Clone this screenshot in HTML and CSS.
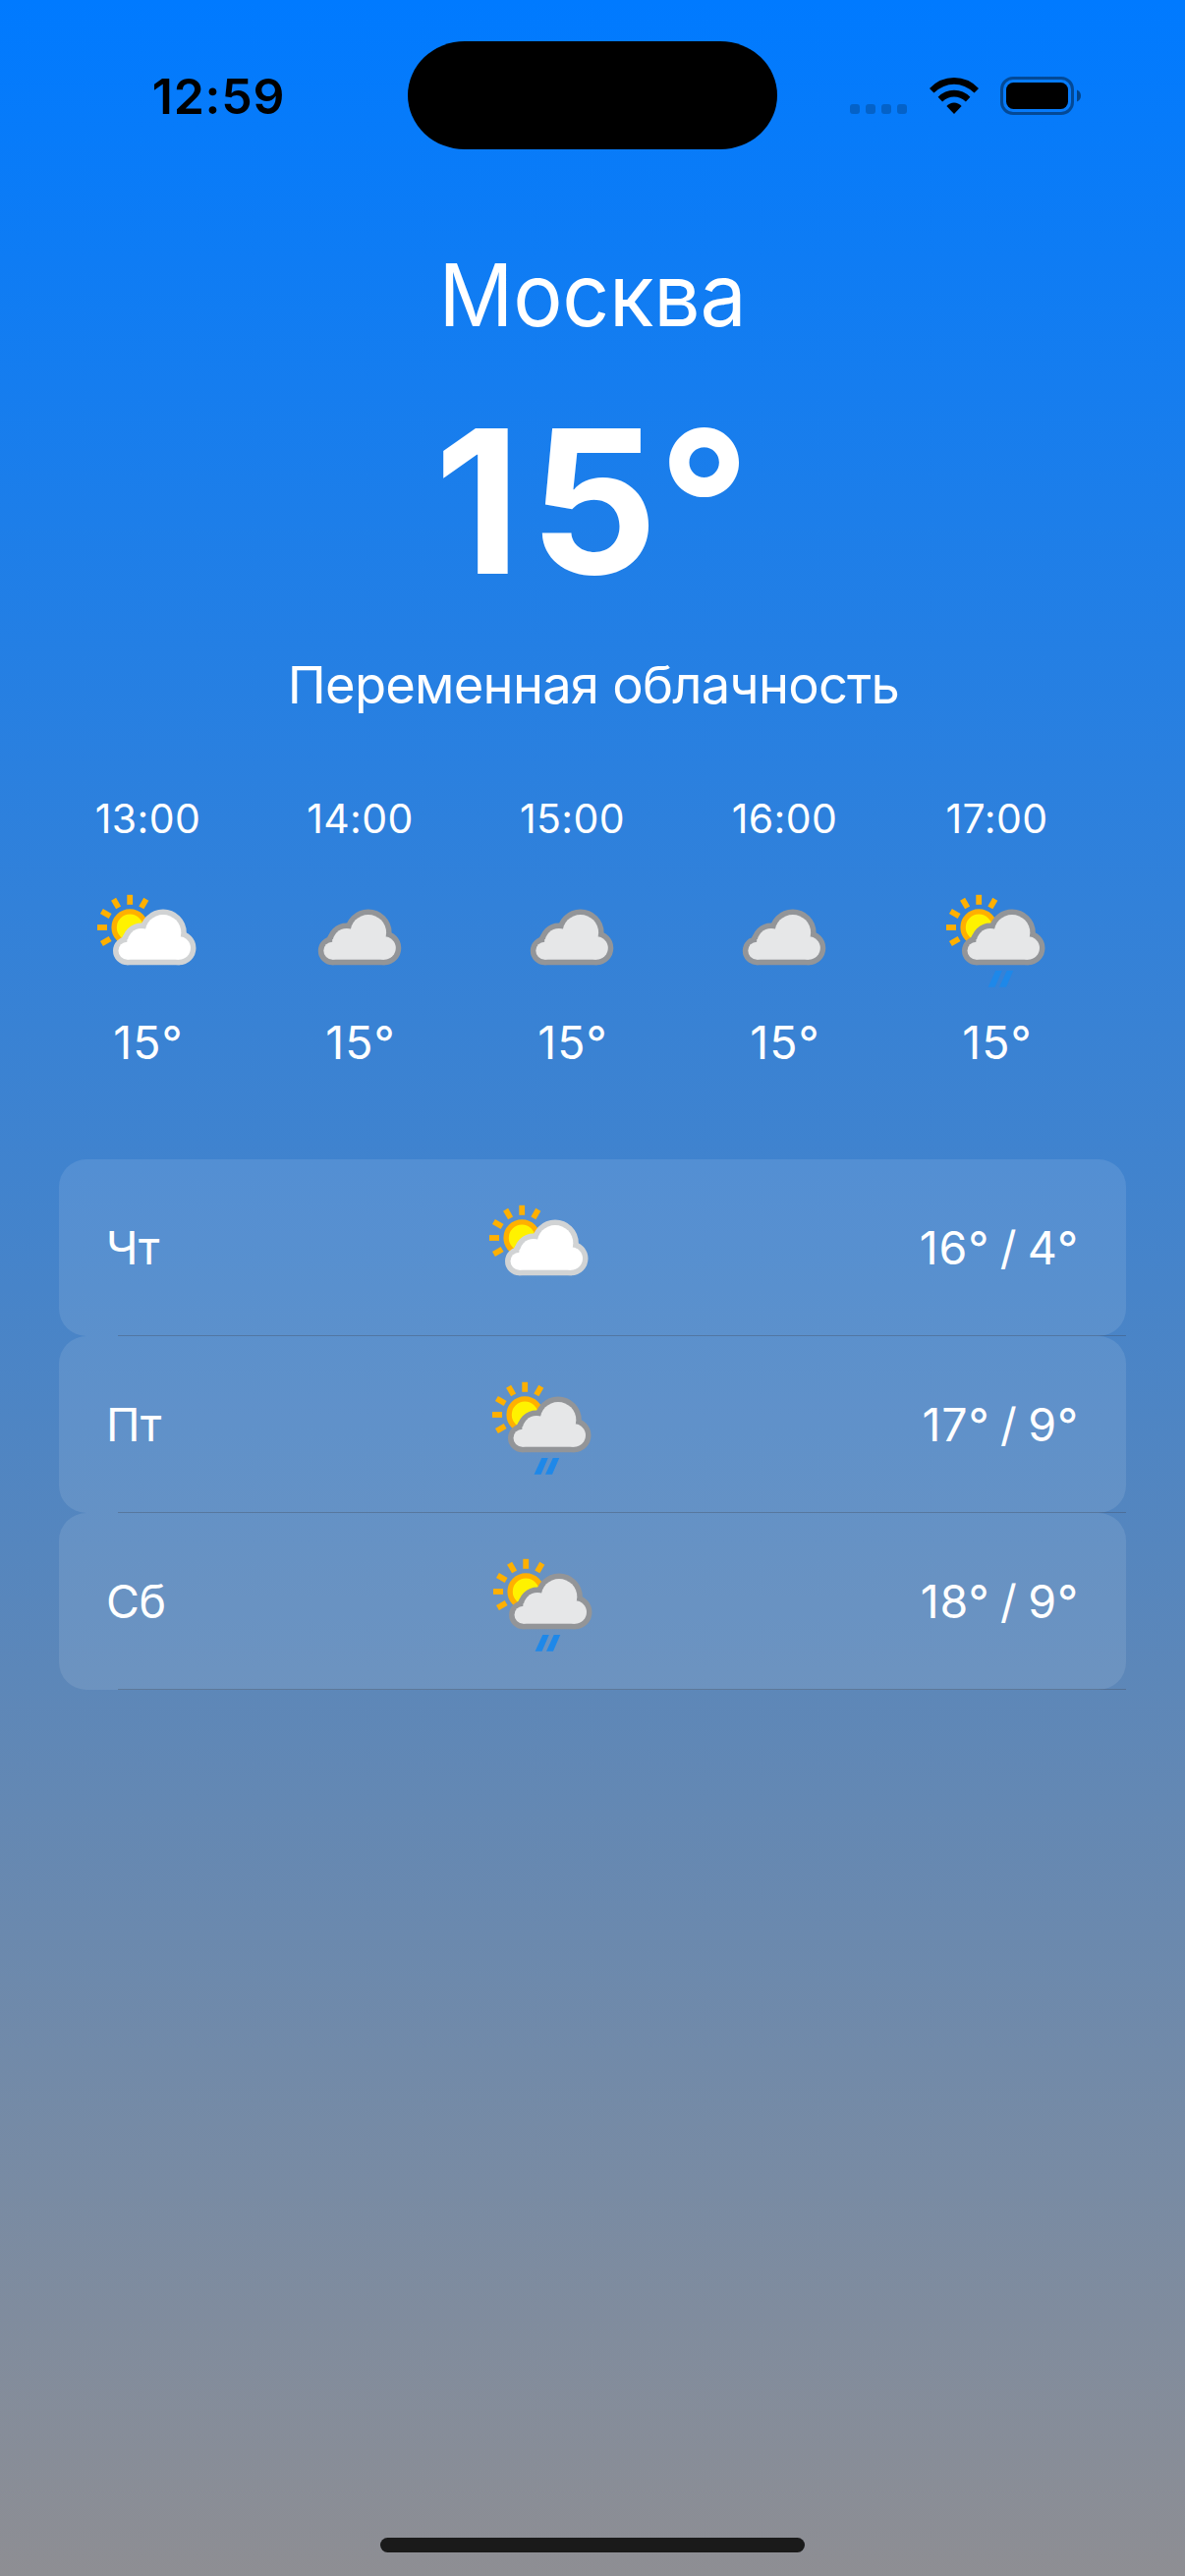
FILE: index.html
```
<!DOCTYPE html>
<html lang="ru">
<head>
<meta charset="utf-8">
<title>Погода</title>
<link rel="stylesheet" href="styles.css">
</head>
<body>
<svg class="defs" aria-hidden="true">
  <defs>
    <g id="sun">
      <circle cx="42.2" cy="50" r="16.1" fill="#fff200" stroke="#ffb000" stroke-width="5.4"/>
      <g stroke="#ffb000" stroke-width="5.8">
        <path d="M19 50H9"/>
        <path d="M19 50H9" transform="rotate(-30 42.2 50)"/>
        <path d="M19 50H9" transform="rotate(30 42.2 50)"/>
        <path d="M19 50H9" transform="rotate(60 42.2 50)"/>
        <path d="M19 50H9" transform="rotate(90 42.2 50)"/>
        <path d="M19 50H9" transform="rotate(120 42.2 50)"/>
      </g>
    </g>
    <g id="puffs">
      <circle cx="76" cy="55.3" r="18.3"/>
      <circle cx="54" cy="65.3" r="14.3"/>
      <circle cx="92.3" cy="71" r="11.7"/>
      <circle cx="39.5" cy="73.7" r="9"/>
      <rect x="39.5" y="62" width="52.8" height="20.7"/>
    </g>
    <g id="white-cloud">
      <use href="#puffs" fill="#d1d3d4" stroke="#d1d3d4" stroke-width="11" stroke-linejoin="round"/>
      <use href="#puffs" fill="#fff"/>
    </g>
    <g id="gray-cloud">
      <use href="#puffs" fill="#939598" stroke="#939598" stroke-width="11" stroke-linejoin="round"/>
      <use href="#puffs" fill="#e6e7e8"/>
    </g>
    <symbol id="partly" viewBox="0 0 120 120"><use href="#sun"/><use href="#white-cloud"/></symbol>
    <symbol id="cloudy" viewBox="0 0 120 120"><use href="#gray-cloud" x="-7.2"/></symbol>
    <symbol id="rain" viewBox="0 0 120 120">
      <use href="#sun"/><use href="#gray-cloud"/>
      <path d="M59.3 94h6.500l-7.200 16.700h-7zM70.700 94h6.500l-7.200 16.700h-7z" fill="#1e88e9"/>
    </symbol>
  </defs>
</svg>
<main class="screen">
  <header class="status">
    <time class="clock">12:59</time>
    <div class="island"></div>
    <div class="indicators">
      <div class="cellular"><i></i><i></i><i></i><i></i></div>
      <svg class="wifi" viewBox="0 0 50 37">
        <path d="M0 10.9Q10.5 0 25 0T50 10.9L45.5 15.5Q36 6.7 25 6.7T4.5 15.5z"/>
        <path d="M8.6 19.7Q15.4 12.7 25 12.7T41.4 19.7L36.9 24.5Q31.5 19.5 25 19.5T13.1 24.5z"/>
        <path d="M17.4 29Q20.6 25.4 25 25.4T32.6 29L25 37z"/>
      </svg>
      <svg class="battery" viewBox="0 0 82 39">
        <rect x="1.5" y="1.5" width="72" height="36" rx="11.5" fill="none" stroke="#000" stroke-opacity=".4" stroke-width="3"/>
        <rect x="6" y="6" width="63" height="27" rx="7.5"/>
        <path d="M78 13.5c2.5 1 4 3.300 4 6s-1.500 5-4 6z" fill-opacity=".45"/>
      </svg>
    </div>
  </header>

  <section class="current">
    <h1 class="city">Москва</h1>
    <p class="now"><span class="tens">1</span>5°</p>
    <p class="summary">Переменная облачность</p>
  </section>

  <section class="hourly">
    <div class="hour"><span class="at">13:00</span><svg class="icon"><use href="#partly"/></svg><span class="deg">15°</span></div>
    <div class="hour"><span class="at">14:00</span><svg class="icon"><use href="#cloudy"/></svg><span class="deg">15°</span></div>
    <div class="hour"><span class="at">15:00</span><svg class="icon"><use href="#cloudy"/></svg><span class="deg">15°</span></div>
    <div class="hour"><span class="at">16:00</span><svg class="icon"><use href="#cloudy"/></svg><span class="deg">15°</span></div>
    <div class="hour"><span class="at">17:00</span><svg class="icon"><use href="#rain"/></svg><span class="deg">15°</span></div>
  </section>

  <section class="daily">
    <div class="day"><span class="name">Чт</span><svg class="icon"><use href="#partly"/></svg><span class="range">16° / 4°</span></div>
    <div class="day"><span class="name">Пт</span><svg class="icon"><use href="#rain"/></svg><span class="range">17° / 9°</span></div>
    <div class="day"><span class="name">Сб</span><svg class="icon"><use href="#rain"/></svg><span class="range">18° / 9°</span></div>
  </section>

  <div class="home"></div>
</main>
</body>
</html>
```
FILE: styles.css
```
* { box-sizing: border-box; }

body {
  margin: 0;
  font-family: Inter, "Noto Sans", sans-serif;
  color: #fff;
}

.defs { display: block; width: 0; height: 0; }

.screen {
  display: flex;
  flex-direction: column;
  width: 1206px;
  height: 2622px;
  background: linear-gradient(#007aff, #8e8e93);
}

.status {
  display: grid;
  grid-template-columns: 415px 376px 1fr;
  height: 152px;
  padding-top: 42px;
  color: #000;
}

.clock {
  padding-left: 154.7px;
  font-size: 50px;
  font-weight: 600;
  line-height: 112px;
  letter-spacing: 0.8px;
}

.island {
  height: 110px;
  border-radius: 58px / 55px;
  background: #000;
}

.indicators {
  display: flex;
  align-items: flex-start;
  padding: 36px 0 0 74px;
}

.cellular {
  display: flex;
  gap: 6px;
  padding-top: 28px;
  margin-right: 22.5px;
}

.cellular i {
  width: 10px;
  height: 10px;
  border-radius: 3px;
  background: rgba(0, 0, 0, 0.2);
}

.wifi { width: 50px; height: 37px; margin: 1px 22.5px 0 0; }
.battery { width: 82px; height: 39px; }

.current {
  padding-top: 94px;
  text-align: center;
}

.city, .now, .summary { margin: 0; }

.city {
  font-size: 88px;
  font-weight: 400;
  line-height: 108px;
  letter-spacing: -0.3px;
  transform: scaleX(0.955);
}

.now {
  margin-top: 31px;
  padding-left: 1px;
  font-size: 204px;
  font-weight: 740;
  line-height: 250px;
  letter-spacing: 1.5px;
}

.tens { letter-spacing: 9px; }

.summary {
  margin-top: 30px;
  padding-left: 2px;
  font-size: 52.5px;
  line-height: 64px;
  letter-spacing: -0.77px;
}

.hourly {
  display: flex;
  gap: 36px;
  margin-top: 79px;
  padding: 0 60px;
}

.hour {
  display: flex;
  flex-direction: column;
  align-items: center;
  width: 180px;
}

.icon { width: 120px; height: 120px; flex: none; }

.at {
  margin-bottom: 36px;
  padding-left: 1px;
  font-size: 41px;
  line-height: 50px;
  letter-spacing: 0.4px;
}

.deg {
  margin-top: 18px;
  padding-left: 2px;
  font-size: 46.5px;
  line-height: 58px;
  letter-spacing: 1px;
}

.daily { margin: 90px 60px 0; }

.day {
  display: flex;
  align-items: center;
  justify-content: space-between;
  position: relative;
  height: 180px;
  padding: 0 48px;
  border-radius: 28px;
  background: rgba(255, 255, 255, 0.1);
  font-size: 46.5px;
  line-height: 58px;
}

.day::after {
  content: "";
  position: absolute;
  left: 60px;
  right: 0;
  bottom: 0;
  height: 1px;
  background: rgba(60, 60, 67, 0.3);
}

.name { letter-spacing: -0.5px; margin-right: 1px; }
.range { letter-spacing: 0.9px; word-spacing: -3.5px; }

.home {
  width: 432px;
  height: 15px;
  margin: auto auto 24px;
  border-radius: 7.5px;
  background: #1a1a1a;
}
```
